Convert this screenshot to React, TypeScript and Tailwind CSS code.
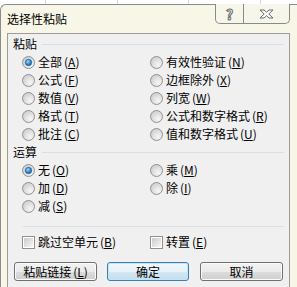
import type { ReactNode } from 'react'

// 单选按钮
function Radio({ checked }: { checked?: boolean }) {
  return (
    <svg width="13" height="13" viewBox="0 0 13 13" className="shrink-0">
      <defs>
        <radialGradient id="rb" cx="0.65" cy="0.7" r="0.7">
          <stop offset="0" stopColor="#f7f7f7" />
          <stop offset="1" stopColor="#cfcfcf" />
        </radialGradient>
        <radialGradient id="rd" cx="0.4" cy="0.35" r="0.7">
          <stop offset="0" stopColor="#9fd6fb" />
          <stop offset="0.6" stopColor="#2f86d0" />
          <stop offset="1" stopColor="#145a9e" />
        </radialGradient>
      </defs>
      <circle cx="6.5" cy="6.5" r="6" fill="url(#rb)" stroke="#929292" />
      {checked && <circle cx="6.5" cy="6.5" r="3.2" fill="url(#rd)" stroke="#1b4f86" strokeWidth="0.6" />}
    </svg>
  )
}

// 复选框
function Check() {
  return (
    <span className="w-[13px] h-[13px] shrink-0 border border-[#8e8f8f] bg-white p-px">
      <span className="block w-full h-full bg-gradient-to-br from-[#cbcbcb] to-[#f6f6f6]" />
    </span>
  )
}

function Key({ k }: { k: string }) {
  return (
    <span className="ml-[2px]">
      (<u className="underline-offset-1">{k}</u>)
    </span>
  )
}

function Opt({ label, k, checked }: { label: string; k: string; checked?: boolean }) {
  return (
    <div className="h-[18px] flex items-center gap-[3px]">
      <Radio checked={checked} />
      <span>
        {label}
        <Key k={k} />
      </span>
    </div>
  )
}

function Group({ title }: { title: string }) {
  return (
    <div className="h-[18px] flex items-center pl-[5px] pr-[5px]">
      <span>{title}</span>
      <div className="flex-1 h-px bg-[#d5dfe5] ml-[5px]" />
    </div>
  )
}

function Btn({ children, w, primary, className }: { children: ReactNode; w: string; primary?: boolean; className?: string }) {
  return (
    <button
      className={
        'h-[19px] rounded-[3px] border flex items-center justify-center p-0 ' +
        w +
        ' ' +
        (primary
          ? 'border-[#3c7fb1] shadow-[inset_0_0_0_1px_#bfe6fb] bg-[linear-gradient(#f1f8fc_0%,#e6f2f9_50%,#d3e7f2_50%,#c4dfee_100%)] '
          : 'border-[#707070] shadow-[inset_0_0_0_1px_#fbfbfb] bg-[linear-gradient(#f2f2f2_0%,#ebebeb_50%,#dddddd_50%,#cfcfcf_100%)] ') +
        (className ?? '')
      }
    >
      {children}
    </button>
  )
}

export default function App() {
  return (
    <div className="w-[297px] h-[287px] overflow-hidden bg-white text-[12px] leading-[14px] text-black font-['Noto_Sans_CJK_SC',sans-serif]">
      {/* 背后的表格 */}
      <div className="flex h-[4px]">
        <div className="w-[46px] border-r border-[#d4d7db]" />
        <div className="w-[72px] border-r border-[#d4d7db]" />
        <div className="w-[71px] border-r border-[#d4d7db]" />
        <div className="w-[72px] border-r border-[#d4d7db]" />
      </div>

      <div className="h-[283px] rounded-tl-[6px] border-l border-t border-[#8c8c8c] bg-[#f8f7e7] flex flex-col">
        {/* 标题栏 */}
        <div className="h-[28px] flex items-start">
          <span className="pl-[6px] pt-[7px]">选择性粘贴</span>
          <div className="ml-auto mr-[7px] -mt-px h-[20px] w-[75px] flex border-x border-b border-[#8a8a8a] rounded-b-[5px] bg-[#f7f6ea]">
            <div className="w-[28px] border-r border-[#8a8a8a] flex items-center justify-center text-[14px] font-bold text-white [-webkit-text-stroke:1px_#6a6a6a]">
              ?
            </div>
            <div className="flex-1 flex items-center justify-center">
              <svg width="15" height="10" viewBox="0 0 15 10">
                <path
                  d="M1 1h4l2.5 2.2L10 1h4l-4.2 4L14 9h-4L7.5 6.8 5 9H1l4.2-4z"
                  fill="#fff"
                  stroke="#6a6a6a"
                  strokeWidth="1"
                  strokeLinejoin="round"
                />
              </svg>
            </div>
          </div>
        </div>

        {/* 内容区 */}
        <div className="ml-[6px] w-[283px] flex-1 border-l border-t border-r border-[#9c9c9c] bg-[#f0f0f0] pt-px">
          <Group title="粘贴" />
          <div className="grid grid-cols-[128px_1fr] pl-[14px]">
            <Opt label="全部" k="A" checked />
            <Opt label="有效性验证" k="N" />
            <Opt label="公式" k="F" />
            <Opt label="边框除外" k="X" />
            <Opt label="数值" k="V" />
            <Opt label="列宽" k="W" />
            <Opt label="格式" k="T" />
            <Opt label="公式和数字格式" k="R" />
            <Opt label="批注" k="C" />
            <Opt label="值和数字格式" k="U" />
          </div>

          <Group title="运算" />
          <div className="grid grid-cols-[128px_1fr] pl-[14px]">
            <Opt label="无" k="O" checked />
            <Opt label="乘" k="M" />
            <Opt label="加" k="D" />
            <Opt label="除" k="I" />
            <Opt label="减" k="S" />
          </div>

          <div className="mt-[11px] ml-[15px] mr-[5px] h-px bg-[#d5dfe5]" />

          <div className="mt-[6px] grid grid-cols-[128px_1fr] pl-[14px]">
            <div className="h-[18px] flex items-center gap-[3px]">
              <Check />
              <span>
                跳过空单元
                <Key k="B" />
              </span>
            </div>
            <div className="h-[18px] flex items-center gap-[3px]">
              <Check />
              <span>
                转置
                <Key k="E" />
              </span>
            </div>
          </div>

          <div className="mt-[11px] flex pl-[6px]">
            <Btn w="w-[83px]">
              粘贴链接
              <Key k="L" />
            </Btn>
            <Btn w="w-[82px]" primary className="ml-[10px]">
              确定
            </Btn>
            <Btn w="w-[83px]" className="ml-[11px]">
              取消
            </Btn>
          </div>
        </div>
      </div>
    </div>
  )
}
